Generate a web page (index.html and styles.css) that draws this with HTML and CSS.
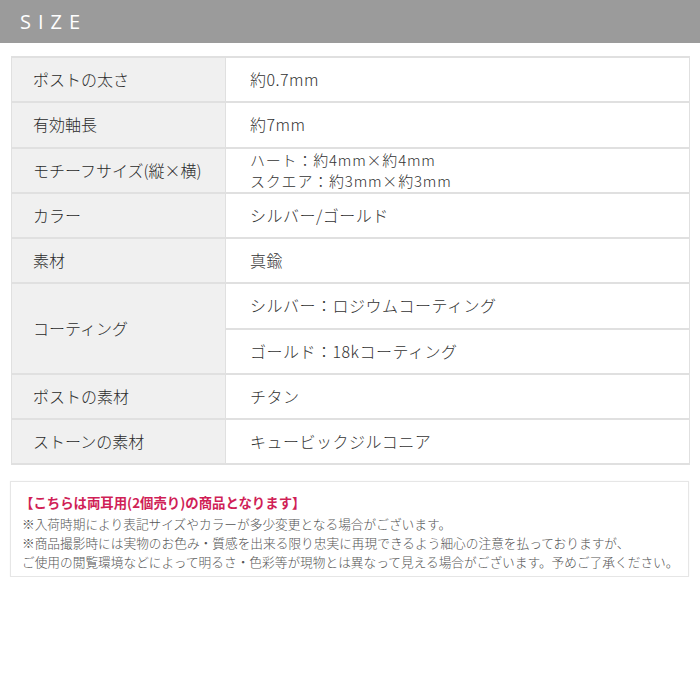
FILE: index.html
```html
<!DOCTYPE html>
<html lang="ja">
<head>
  <meta charset="UTF-8">
  <meta name="viewport" content="width=device-width, initial-scale=1.0">
  <title>SIZE</title>
  <link rel="stylesheet" href="styles.css">
</head>
<body>
  <header class="size-head">
    <h2>SIZE</h2>
  </header>

  <table class="spec">
    <tr>
      <th>ポストの太さ</th>
      <td>約0.7mm</td>
    </tr>
    <tr>
      <th>有効軸長</th>
      <td>約7mm</td>
    </tr>
    <tr>
      <th>モチーフサイズ(縦×横)</th>
      <td class="multi">ハート：約4mm×約4mm<br>スクエア：約3mm×約3mm</td>
    </tr>
    <tr>
      <th>カラー</th>
      <td>シルバー/ゴールド</td>
    </tr>
    <tr>
      <th>素材</th>
      <td>真鍮</td>
    </tr>
    <tr>
      <th rowspan="2">コーティング</th>
      <td>シルバー：ロジウムコーティング</td>
    </tr>
    <tr>
      <td>ゴールド：18kコーティング</td>
    </tr>
    <tr>
      <th>ポストの素材</th>
      <td>チタン</td>
    </tr>
    <tr>
      <th>ストーンの素材</th>
      <td>キュービックジルコニア</td>
    </tr>
  </table>

  <div class="note">
    <p class="note-title">【こちらは両耳用(2個売り)の商品となります】</p>
    <p>※入荷時期により表記サイズやカラーが多少変更となる場合がございます。</p>
    <p>※商品撮影時には実物のお色み・質感を出来る限り忠実に再現できるよう細心の注意を払っておりますが、</p>
    <p>ご使用の閲覧環境などによって明るさ・色彩等が現物とは異なって見える場合がございます。予めご了承ください。</p>
  </div>
</body>
</html>
```

FILE: styles.css
```css
:root {
  --head-gray: #9b9b9b;
  --line: #e0e0e0;
  --label-bg: #f0f0f0;
  --text: #2a2a2a;
  --accent: #d01f57;
}

body {
  margin: 0;
  background: #fff;
  color: var(--text);
  font-family: "Noto Sans CJK JP", "Noto Sans", sans-serif;
}

.size-head {
  background-color: var(--head-gray);
  height: 43px;
  display: flex;
  align-items: center;
  padding-left: 20px;
}

.size-head h2 {
  margin: 0;
  color: #fff;
  font-family: "Open Sans", sans-serif;
  font-weight: 400;
  font-size: 20px;
  letter-spacing: 7px;
}

.spec {
  margin: 13px 10px 0 11px;
  width: 679px;
  border-collapse: collapse;
  border: 1px solid #d4d4d4;
  font-size: 16px;
}

.spec th,
.spec td {
  height: 43.25px;
  padding: 0;
  border: 1px solid var(--line);
  border-width: 2px 1px;
  text-align: left;
  font-weight: 300;
  line-height: 21px;
}

.spec th {
  width: 192px;
  padding-left: 21px;
  background-color: var(--label-bg);
  color: var(--text);
}

.spec td {
  padding-left: 24px;
  color: #333;
  letter-spacing: 0.5px;
}

.spec td.multi {
  font-size: 15px;
  letter-spacing: 0.8px;
  line-height: 21px;
}

.note {
  margin: 16px 11px 0 10px;
  padding: 8px 11px 5px;
  border: 1px solid #e6e6e6;
  box-shadow: 0 0 2px rgba(0, 0, 0, 0.04);
}

.note p {
  margin: 0;
  font-size: 12.7px;
  font-weight: 300;
  line-height: 19px;
  color: #555;
  white-space: nowrap;
}

.note .note-title {
  color: var(--accent);
  font-weight: 700;
  font-size: 13.4px;
  line-height: 24px;
  margin-left: -2px;
}
```
